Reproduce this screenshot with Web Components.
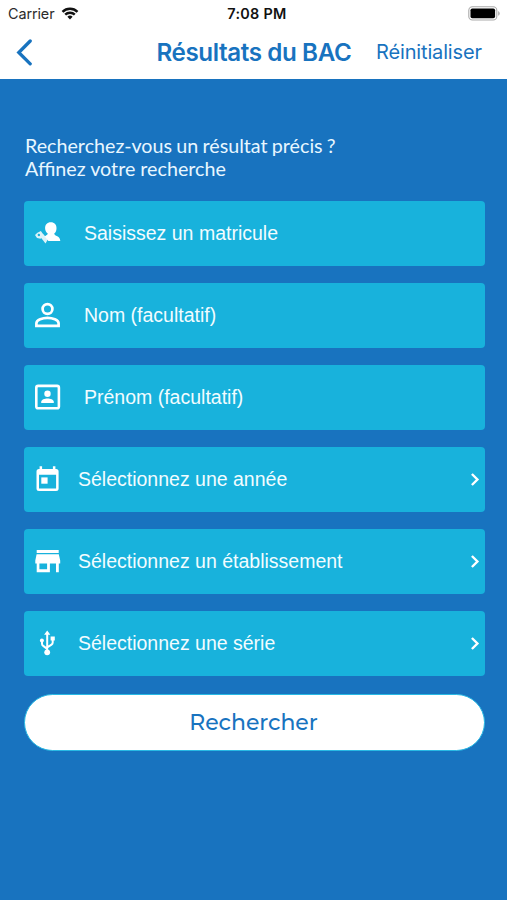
<!DOCTYPE html>
<html lang="fr">
<head>
<meta charset="utf-8">
<title>Résultats du BAC</title>
<style>
html, body { margin: 0; height: 100%; background: #1873bf; overflow: hidden; }
</style>
</head>
<body>
<search-screen></search-screen>
<script>
const define = (name, html) => {
  const t = document.createElement('template');
  t.innerHTML = html;
  customElements.define(name, class extends HTMLElement {
    constructor() {
      super();
      this.attachShadow({ mode: 'open' }).append(t.content.cloneNode(true));
    }
  });
};

define('status-bar', `
<style>
:host { display: grid; grid-template-columns: 1fr auto 1fr; align-items: center; height: 27px; padding: 0 7px 0 14px; box-sizing: border-box; font: 14.4px/27px Inter, sans-serif; color: #2b2b2b; }
.l { display: flex; align-items: center; gap: 7px; margin-left: -6px; }
.l span { letter-spacing: -.1px; }
.t { font-weight: 600; color: #111; letter-spacing: .3px; }
.r { display: flex; justify-content: flex-end; }
svg { display: block; }
</style>
<div class="l"><span>Carrier</span>
<svg width="18" height="13" viewBox="0 0 17 13" fill="none" stroke="#111" stroke-width="2.4"><path d="M1 4.8a10.6 10.6 0 0 1 15 0"/><path d="M3.7 7.7a6.8 6.8 0 0 1 9.6 0"/><path d="M8.5 12.4 5.9 9.8a3.7 3.7 0 0 1 5.2 0z" fill="#111" stroke="none"/></svg></div>
<div class="t">7:08 PM</div>
<div class="r"><svg width="32" height="15" viewBox="0 0 32 15"><rect x=".8" y=".8" width="28" height="13.2" rx="3.6" fill="#fff" stroke="#aaa" stroke-width="1.1"/><rect x="2.5" y="2.5" width="24.6" height="9.8" rx="1.8"/><path d="M30.2 5.1q1.5.6 1.5 2.3t-1.5 2.3z" fill="#aaa"/></svg></div>`);

define('nav-bar', `
<style>
:host { display: flex; align-items: center; height: 51px; color: #1873bf; font-family: Inter, sans-serif; box-sizing: border-box; padding-left: 16px; white-space: nowrap; }
svg { display: block; flex: none; }
h1 { margin: 0 0 0 123.5px; width: 193.5px; font-size: 24.2px; font-weight: 600; letter-spacing: -.4px; line-height: 51px; }
a { margin-left: 26px; font-size: 20px; line-height: 51px; letter-spacing: -.15px; }
</style>
<svg width="17" height="28" viewBox="0 0 17 28" fill="none" stroke="#1873bf" stroke-width="3.3" stroke-linecap="round"><path d="M14.2 2 2.8 13.5 14.2 24.8"/></svg>
<h1><slot></slot></h1><a><slot name="action"></slot></a>`);

define('form-row', `
<style>
:host { display: flex; align-items: center; height: 65px; box-sizing: border-box; padding: 0 4px 0 10px; border-radius: 4px; background: #18b2dc; color: #f2fcff; font: 19.5px/65px "Liberation Sans", Arial, sans-serif; white-space: nowrap; }
.icon { display: flex; width: 28px; height: 28px; flex: none; }
.label { flex: 1; margin-left: 22px; }
:host([select]) .label { margin-left: 16px; }
.arrow { display: none; }
:host([select]) .arrow { display: block; }
</style>
<div class="icon"><slot name="icon"></slot></div>
<div class="label"><slot></slot></div>
<svg class="arrow" width="11" height="14" viewBox="0 0 11 14" fill="none" stroke="#fff" stroke-width="2.4"><path d="m1.9 1 5.5 5.5-5.5 5.5"/></svg>`);

define('pill-button', `
<style>
:host { display: flex; justify-content: center; align-items: center; height: 57px; box-sizing: border-box; border: 1px solid #28b9e4; border-radius: 29px; background: #fff; color: #1873bf; font: 500 22px/55px Montserrat, Inter, sans-serif; letter-spacing: -.05px; padding-right: 2px; }
</style><slot></slot>`);

define('search-screen', `
<style>
:host { display: flex; flex-direction: column; height: 900px; background: #1873bf; }
header { background: #fff; height: 79px; }
main { padding: 55px 22px 0 24px; }
p { margin: 0 0 21px 1px; font: 19.7px/23px Lato, sans-serif; color: #e8f7ff; white-space: nowrap; }
p span { word-spacing: -.8px; }
form { display: flex; flex-direction: column; gap: 17px; }
pill-button { margin-top: 1px; }
form-row svg { width: 28px; height: 28px; fill: #fff; display: block; overflow: visible; }
</style>
<header><status-bar></status-bar><nav-bar>Résultats du BAC<span slot="action">Réinitialiser</span></nav-bar></header>
<main>
<p><span>Recherchez-vous un résultat précis ?</span><br>Affinez votre recherche</p>
<form>
<form-row><svg slot="icon" viewBox="0 0 28 28"><path d="M16.8 2.2c3.7 0 5.8 2.4 5.7 6 0 2.400-.9 4.200-2.300 5.400.3 1.600 1.500 2 3.100 2.700 1.800.8 2.700 2 3 4.800H14.400l-3.800-4.600c.9-.8 2.700-1 3.200-2.900-1.400-1.200-2.700-3-2.700-5.400 0-3.600 2-6 5.700-6z"/><g opacity=".85"><path d="m6 16.600 2.800-3 5 5.900-2.300 3.900z"/><path fill-rule="evenodd" d="M1 15 3.400 12.800 6.900 10.900 9.300 14.600 6.600 18.800 3 18zM4.800 13.800a1.200 1.200 0 1 0 .1 2.400 1.200 1.200 0 0 0-.1-2.400z"/></g></svg>Saisissez un matricule</form-row>
<form-row><svg slot="icon" viewBox="0 0 28 28" style="fill:none;stroke:#fff;stroke-width:2.7"><circle cx="13.5" cy="7" r="4.9"/><path d="M2.4 23.9v-2.6c0-3.5 6.2-5.5 11.1-5.5s11.1 2 11.1 5.5v2.6z"/></svg>Nom (facultatif)</form-row>
<form-row><svg slot="icon" viewBox="0 0 28 28"><rect x="2.3" y="1.9" width="22.6" height="22.4" rx="1.8" fill="none" stroke="#fff" stroke-width="2.6"/><circle cx="13.5" cy="9.7" r="3.2"/><path d="M7.2 19.1v-1.2c0-2.1 3.6-3.3 6.3-3.3s6.3 1.2 6.3 3.3v1.2z"/></svg>Prénom (facultatif)</form-row>
<form-row select><svg slot="icon" viewBox="0 0 28 28"><path fill-rule="evenodd" d="M5.6.3h2.5v2.6h10.8V.3h2.5v2.6h.7a2.5 2.5 0 0 1 2.5 2.5v17.1a2.5 2.5 0 0 1-2.5 2.5H5a2.5 2.5 0 0 1-2.5-2.5V5.4A2.5 2.5 0 0 1 5 2.9h.6zM5 8.800v13.700h17.100V8.800z"/><rect x="7.3" y="11.4" width="6.3" height="6.3"/></svg>Sélectionnez une année</form-row>
<form-row select><svg slot="icon" viewBox="0 0 28 28"><path fill-rule="evenodd" d="M2.7 2h22v2.900h-22zM2.600 6.200h22.200l1.400 6.300v3.100h-1.400v8.600h-2.800v-8.600h-6.100v8.600H2.700v-8.600H1.300v-3.100zM5.400 15.600v5.700h7.700v-5.700z"/></svg>Sélectionnez un établissement</form-row>
<form-row select><svg slot="icon" viewBox="0 0 28 28"><g fill="none" stroke="#fff" stroke-width="2"><path d="M13.200 4v19M8 11V13.700q0 1.400 1.200 2.200l4 3M18.700 9.200v3.300q0 1.400-1.200 2.200l-4.200 2.700"/></g><circle cx="13.200" cy="22.300" r="2.900"/><circle cx="7.900" cy="10.500" r="2"/><path d="M13.200.4l3.100 4.400h-6.200zM16.600 6.600h4.200v4h-4.200z"/></svg>Sélectionnez une série</form-row>
<pill-button>Rechercher</pill-button>
</form>
</main>`);
</script>
</body>
</html>
